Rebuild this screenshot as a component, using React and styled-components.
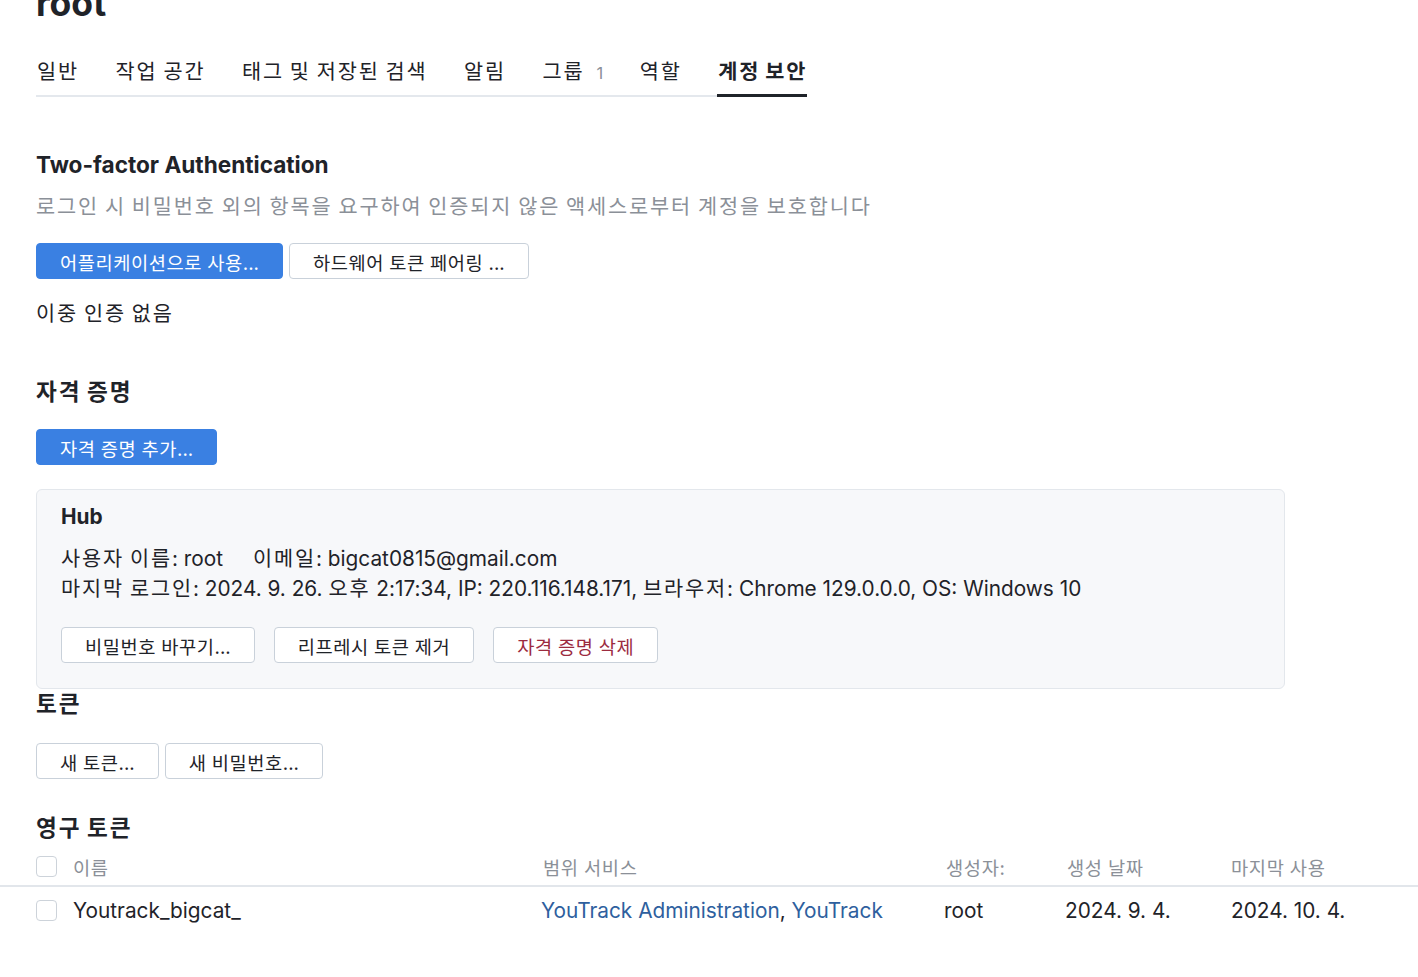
import React from 'react';
import styled, { createGlobalStyle } from 'styled-components';

const GlobalStyle = createGlobalStyle`
    html, body {
        margin: 0;
        padding: 0;
        background: #fff;
        overflow: hidden;
    }
    body {
        font-family: Inter, "Noto Sans CJK KR", sans-serif;
        color: #1f2329;
    }
`;

// hangul in the reference sits wider than Noto CJK, so runs get some tracking
const Ko = styled.span`
    letter-spacing: 0.09em;
`;

const ko = (str) =>
    str.split(/([가-힣]+)/).map((part, i) => (/[가-힣]/.test(part) ? <Ko key={i}>{part}</Ko> : part));

const Page = styled.div`
    padding-left: 36px;
    height: 977px;
    overflow: hidden;
`;

const Title = styled.h1`
    margin: -16px 0 0;
    font-size: 35.5px;
    line-height: 40px;
    font-weight: 700;
`;

const TabBar = styled.div`
    display: inline-flex;
    gap: 35.5px;
    margin-top: 33px;
    border-bottom: 2px solid #e4e8ed;
`;

const Tab = styled.div`
    font-size: 20.8px;
    line-height: 30px;
    padding: 0 0 6px 1px;
    margin-bottom: -2px;
    color: #1f2329;
    font-weight: ${(p) => (p.active ? 700 : 400)};
    border-bottom: 3px solid ${(p) => (p.active ? '#1f2329' : 'transparent')};
    display: flex;
    align-items: baseline;
    gap: 12px;
`;

const Count = styled.span`
    font-size: 16.5px;
    color: #8b9098;
`;

const Heading = styled.h2`
    margin: ${(p) => p.top || 0}px 0 0;
    font-size: 22.6px;
    line-height: 30px;
    font-weight: 700;
`;

const Muted = styled.p`
    margin: 12px 0 0;
    font-size: 20.8px;
    line-height: 30px;
    color: #8b9098;
`;

const Text = styled.p`
    margin: ${(p) => p.top || 0}px 0 0;
    font-size: 20.8px;
    line-height: 30px;
`;

const ButtonRow = styled.div`
    display: flex;
    gap: ${(p) => p.gap || 6}px;
    margin-top: ${(p) => p.top || 0}px;
`;

const Button = styled.button`
    height: 36px;
    padding: 0 23px;
    font-family: inherit;
    font-size: 18.7px;
    border-radius: 4px;
    cursor: pointer;
    background: ${(p) => (p.primary ? '#3a80e2' : '#fff')};
    color: ${(p) => (p.primary ? '#fff' : p.danger ? '#9c2b3f' : '#1f2329')};
    border: 1px solid ${(p) => (p.primary ? '#3a80e2' : '#c9d1da')};

    ${Ko} {
        letter-spacing: 0.03em;
    }
`;

const Card = styled.div`
    margin-top: 24px;
    width: 1249px;
    box-sizing: border-box;
    height: 200px;
    padding: 12px 24px;
    background: #f7f8fa;
    border: 1px solid #e3e7ec;
    border-radius: 6px;
`;

const CardTitle = styled.div`
    font-size: 20.8px;
    line-height: 30px;
    font-weight: 700;
`;

const InfoLine = styled.div`
    font-size: 20.8px;
    line-height: 30px;
    display: flex;
    gap: 30px;
    margin-top: ${(p) => p.top || 0}px;
`;

const Table = styled.div`
    margin: 4px 0 0 -36px;
`;

const Row = styled.div`
    display: grid;
    grid-template-columns: 541px 403px 121px 166px 1fr;
    align-items: center;
    height: ${(p) => (p.head ? 38 : 47)}px;
    border-bottom: ${(p) => (p.head ? '2px solid #e2e6eb' : 'none')};
    font-size: ${(p) => (p.head ? 18.7 : 20.8)}px;
    color: ${(p) => (p.head ? '#8b9098' : '#1f2329')};

    ${Ko} {
        letter-spacing: ${(p) => (p.head ? '0.035em' : '0.09em')};
    }
`;

const NameCell = styled.div`
    display: flex;
    align-items: center;
    gap: 16px;
    padding-left: 36px;
`;

const Check = styled.span`
    width: 19px;
    height: 19px;
    border: 1px solid #cdd3da;
    border-radius: 4px;
    background: #fff;
`;

const Cell = styled.div`
    padding-left: ${(p) => p.shift || 0}px;
`;

const Link = styled.a`
    color: #2e5f9e;
    text-decoration: none;
`;

export default function App() {
    const tabs = ['일반', '작업 공간', '태그 및 저장된 검색', '알림', '그룹', '역할', '계정 보안'];
    return (
        <Page>
            <GlobalStyle />
            <Title>root</Title>
            <TabBar>
                {tabs.map((t) => (
                    <Tab key={t} active={t === '계정 보안'}>
                        <span>{ko(t)}</span>
                        {t === '그룹' && <Count>1</Count>}
                    </Tab>
                ))}
            </TabBar>

            <Heading top={53}>Two-factor Authentication</Heading>
            <Muted>{ko('로그인 시 비밀번호 외의 항목을 요구하여 인증되지 않은 액세스로부터 계정을 보호합니다')}</Muted>
            <ButtonRow top={21}>
                <Button primary>{ko('어플리케이션으로 사용...')}</Button>
                <Button>{ko('하드웨어 토큰 페어링 ...')}</Button>
            </ButtonRow>
            <Text top={20}>{ko('이중 인증 없음')}</Text>

            <Heading top={48}>{ko('자격 증명')}</Heading>
            <ButtonRow top={22}>
                <Button primary>{ko('자격 증명 추가...')}</Button>
            </ButtonRow>

            <Card>
                <CardTitle>Hub</CardTitle>
                <InfoLine top={12}>
                    <span>{ko('사용자 이름: root')}</span>
                    <span>{ko('이메일: bigcat0815@gmail.com')}</span>
                </InfoLine>
                <InfoLine>
                    <span>
                        {ko('마지막 로그인: 2024. 9. 26. 오후 2:17:34, IP: 220.116.148.171, 브라우저: Chrome 129.0.0.0, OS: Windows 10')}
                    </span>
                </InfoLine>
                <ButtonRow top={23} gap={19}>
                    <Button>{ko('비밀번호 바꾸기...')}</Button>
                    <Button>{ko('리프레시 토큰 제거')}</Button>
                    <Button danger>{ko('자격 증명 삭제')}</Button>
                </ButtonRow>
            </Card>

            <Heading>{ko('토큰')}</Heading>
            <ButtonRow top={24}>
                <Button>{ko('새 토큰...')}</Button>
                <Button>{ko('새 비밀번호...')}</Button>
            </ButtonRow>

            <Heading top={34}>{ko('영구 토큰')}</Heading>
            <Table>
                <Row head>
                    <NameCell>
                        <Check />
                        {ko('이름')}
                    </NameCell>
                    <Cell shift={2}>{ko('범위 서비스')}</Cell>
                    <Cell shift={2}>{ko('생성자:')}</Cell>
                    <Cell shift={2}>{ko('생성 날짜')}</Cell>
                    <Cell>{ko('마지막 사용')}</Cell>
                </Row>
                <Row>
                    <NameCell>
                        <Check />
                        Youtrack_bigcat_
                    </NameCell>
                    <Cell>
                        <Link href="#">YouTrack Administration</Link>, <Link href="#">YouTrack</Link>
                    </Cell>
                    <Cell>root</Cell>
                    <Cell>2024. 9. 4.</Cell>
                    <Cell>2024. 10. 4.</Cell>
                </Row>
            </Table>
        </Page>
    );
}
